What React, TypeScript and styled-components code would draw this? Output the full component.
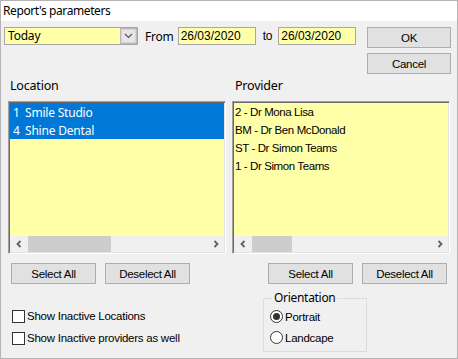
import React from "react";
import styled, { createGlobalStyle } from "styled-components";

const UI = `"Noto Sans", "Open Sans", sans-serif`;
const CLASSIC = `"Liberation Sans", Arial, sans-serif`;
const YELLOW = "#ffffa8";

const Global = createGlobalStyle`
  html, body { margin: 0; padding: 0; background: #f0f0f0; }
  * { box-sizing: border-box; }
`;

const Window = styled.div`
  width: 458px;
  height: 359px;
  border: 1px solid #b4b4b4;
  background: #f0f0f0;
  display: flex;
  flex-direction: column;
  overflow: hidden;
`;

const TitleBar = styled.div`
  height: 20px;
  background: #fff;
  padding-left: 2px;
  font-family: ${UI};
  font-size: 12px;
  line-height: 20px;
  letter-spacing: -0.4px;
  color: #000;
`;

const Body = styled.div`
  flex: 1;
  padding: 6px 6px 0 3px;
  display: flex;
  flex-direction: column;
`;

const TopRow = styled.div`
  display: flex;
  justify-content: space-between;
  align-items: flex-start;
`;

const Filters = styled.div`
  display: flex;
  align-items: center;
  height: 18px;
`;

const Combo = styled.div`
  width: 134px;
  height: 18px;
  display: flex;
  border: 1px solid #a7a7a7;
  background: ${YELLOW};
`;

const ComboText = styled.div`
  flex: 1;
  font-family: ${UI};
  font-size: 12px;
  line-height: 16px;
  padding-left: 3px;
  letter-spacing: -0.2px;
  color: #000;
`;

const ComboButton = styled.div`
  width: 17px;
  height: 16px;
  background: #e6e6e6;
  border: 1px solid #b9b9b9;
  box-shadow: inset 0 0 0 1px #d4d4d4;
  display: flex;
  align-items: center;
  justify-content: center;
`;

const InlineLabel = styled.span<{ $ml: number; $mr: number; $font?: string }>`
  font-family: ${(p) => p.$font || UI};
  font-size: 12px;
  color: #000;
  margin: 0 ${(p) => p.$mr}px 0 ${(p) => p.$ml}px;
  letter-spacing: -0.2px;
`;

const DateField = styled.div`
  width: 78px;
  height: 18px;
  border: 1px solid #a7a7a7;
  background: ${YELLOW};
  font-family: ${CLASSIC};
  font-size: 12px;
  line-height: 16px;
  padding-left: 2px;
  color: #000;
`;

const ButtonColumn = styled.div`
  display: flex;
  flex-direction: column;
  gap: 5px;
`;

const Button = styled.div<{ $w?: number }>`
  width: ${(p) => p.$w || 85}px;
  height: 21px;
  background: #e1e1e1;
  border: 1px solid #adadad;
  display: flex;
  align-items: center;
  justify-content: center;
  font-family: ${CLASSIC};
  font-size: 11.5px;
  letter-spacing: -0.3px;
  color: #000;
`;

const Columns = styled.div`
  display: grid;
  grid-template-columns: 218px 218px;
  column-gap: 6px;
  margin: 4px 0 0 4px;
`;

const Panel = styled.div`
  display: flex;
  flex-direction: column;
`;

const PanelLabel = styled.div<{ $indent: number }>`
  font-family: ${UI};
  font-size: 12.5px;
  line-height: 16px;
  height: 16px;
  padding-left: ${(p) => p.$indent}px;
  letter-spacing: -0.2px;
  color: #000;
`;

const ListBox = styled.div`
  margin-top: 7px;
  height: 153px;
  border: 1px solid;
  border-color: #a0a0a0 #ffffff #ffffff #a0a0a0;
  box-shadow: inset 1px 1px 0 #696969, inset -1px -1px 0 #e3e3e3;
  padding: 1px;
  display: flex;
  flex-direction: column;
`;

const Items = styled.div`
  flex: 1;
  background: ${YELLOW};
`;

const Row = styled.div<{ $selected?: boolean; $classic?: boolean }>`
  height: 18px;
  display: flex;
  align-items: center;
  background: ${(p) => (p.$selected ? "#0078d7" : "transparent")};
  color: ${(p) => (p.$selected ? "#fff" : "#000")};
  font-family: ${(p) => (p.$classic ? CLASSIC : UI)};
  font-size: ${(p) => (p.$classic ? "11.5px" : "12px")};
  letter-spacing: ${(p) => (p.$classic ? "-0.4px" : "-0.2px")};
  padding-left: ${(p) => (p.$classic ? 1 : 3)}px;
  white-space: pre;
`;

const Num = styled.span`
  width: 12px;
`;

const ScrollBar = styled.div`
  height: 16px;
  background: #f0f0f0;
  display: flex;
  align-items: stretch;
`;

const ScrollArrow = styled.div`
  width: 17px;
  display: flex;
  align-items: center;
  justify-content: center;
`;

const Track = styled.div`
  flex: 1;
  display: flex;
  align-items: stretch;
`;

const Thumb = styled.div`
  background: #cdcdcd;
  margin: 0 1px;
`;

const ButtonRow = styled.div<{ $right?: boolean }>`
  margin-top: 9px;
  display: flex;
  gap: 9px;
  justify-content: ${(p) => (p.$right ? "flex-end" : "flex-start")};
  padding: ${(p) => (p.$right ? "0 3px 0 0" : "0 0 0 3px")};
`;

const Bottom = styled.div`
  margin-top: 6px;
  display: flex;
`;

const CheckColumn = styled.div`
  width: 259px;
  padding: 15px 0 0 8px;
  display: flex;
  flex-direction: column;
`;

const OptionRow = styled.label<{ $h: number }>`
  height: ${(p) => p.$h}px;
  display: flex;
  align-items: center;
  font-family: ${CLASSIC};
  font-size: 11.5px;
  letter-spacing: -0.25px;
  color: #000;
`;

const CheckBox = styled.span`
  width: 13px;
  height: 13px;
  border: 1px solid #333;
  background: #fff;
  margin-right: 2px;
`;

const Radio = styled.span<{ $checked?: boolean }>`
  width: 13px;
  height: 13px;
  border-radius: 50%;
  border: 1px solid #333;
  background: #fff;
  margin-right: 2px;
  display: flex;
  align-items: center;
  justify-content: center;
  &::after {
    content: "";
    width: 7px;
    height: 7px;
    border-radius: 50%;
    background: ${(p) => (p.$checked ? "#333" : "transparent")};
  }
`;

const Group = styled.fieldset`
  margin: 0;
  width: 104px;
  border: 1px solid #dcdcdc;
  padding: 0 0 3px 6px;
`;

const Legend = styled.legend`
  margin-left: 2px;
  padding: 0 2px;
  font-family: ${UI};
  font-size: 12px;
  line-height: 16px;
  letter-spacing: -0.3px;
  color: #000;
`;

const Chevron = ({ dir }: { dir: "left" | "right" | "down" }) => {
  if (dir === "down")
    return (
      <svg width="9" height="6" viewBox="0 0 9 6">
        <polyline points="1,1 4.5,4.5 8,1" fill="none" stroke="#555" strokeWidth="1.2" />
      </svg>
    );
  const pts = dir === "left" ? "4.5,1 1.5,4 4.5,7" : "1.5,1 4.5,4 1.5,7";
  return (
    <svg width="6" height="8" viewBox="0 0 6 8">
      <polyline points={pts} fill="none" stroke="#606060" strokeWidth="1.8" />
    </svg>
  );
};

const Scroll = ({ thumb }: { thumb: number }) => (
  <ScrollBar>
    <ScrollArrow>
      <Chevron dir="left" />
    </ScrollArrow>
    <Track>
      <Thumb style={{ width: thumb }} />
    </Track>
    <ScrollArrow>
      <Chevron dir="right" />
    </ScrollArrow>
  </ScrollBar>
);

const locations = [
  { num: "1", name: "Smile Studio" },
  { num: "4", name: "Shine Dental" },
];

const providers = [
  "2 - Dr Mona Lisa",
  "BM - Dr Ben McDonald",
  "ST - Dr Simon Teams",
  "1 - Dr Simon Teams",
];

export default function App() {
  return (
    <>
      <Global />
      <Window>
        <TitleBar>Report's parameters</TitleBar>
        <Body>
          <TopRow>
            <Filters>
              <Combo>
                <ComboText>Today</ComboText>
                <ComboButton>
                  <Chevron dir="down" />
                </ComboButton>
              </Combo>
              <InlineLabel $ml={7} $mr={4}>From</InlineLabel>
              <DateField>26/03/2020</DateField>
              <InlineLabel $ml={7} $mr={6} $font={CLASSIC}>to</InlineLabel>
              <DateField>26/03/2020</DateField>
            </Filters>
            <ButtonColumn>
              <Button $w={84}>OK</Button>
              <Button $w={84}>Cancel</Button>
            </ButtonColumn>
          </TopRow>
          <Columns>
            <Panel>
              <PanelLabel $indent={2}>Location</PanelLabel>
              <ListBox>
                <Items>
                  {locations.map((l) => (
                    <Row key={l.num} $selected>
                      <Num>{l.num}</Num>
                      {l.name}
                    </Row>
                  ))}
                </Items>
                <Scroll thumb={83} />
              </ListBox>
              <ButtonRow>
                <Button>Select All</Button>
                <Button>Deselect All</Button>
              </ButtonRow>
            </Panel>
            <Panel>
              <PanelLabel $indent={3}>Provider</PanelLabel>
              <ListBox>
                <Items>
                  {providers.map((p) => (
                    <Row key={p} $classic>
                      {p}
                    </Row>
                  ))}
                </Items>
                <Scroll thumb={40} />
              </ListBox>
              <ButtonRow $right>
                <Button>Select All</Button>
                <Button>Deselect All</Button>
              </ButtonRow>
            </Panel>
          </Columns>
          <Bottom>
            <CheckColumn>
              <OptionRow $h={22}>
                <CheckBox />
                Show Inactive Locations
              </OptionRow>
              <OptionRow $h={22}>
                <CheckBox />
                Show Inactive providers as well
              </OptionRow>
            </CheckColumn>
            <Group>
              <Legend>Orientation</Legend>
              <OptionRow $h={21}>
                <Radio $checked />
                Portrait
              </OptionRow>
              <OptionRow $h={21}>
                <Radio />
                Landcape
              </OptionRow>
            </Group>
          </Bottom>
        </Body>
      </Window>
    </>
  );
}
